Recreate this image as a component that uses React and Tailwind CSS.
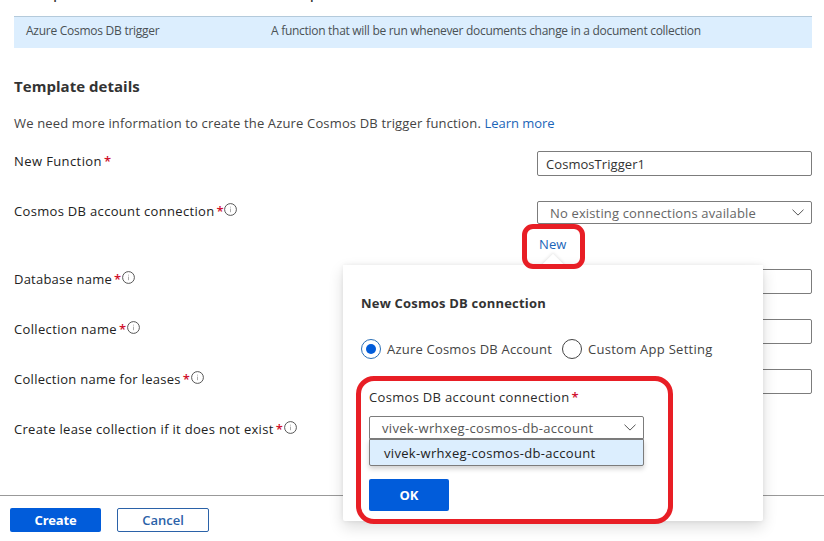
function InfoIcon() {
  return (
    <svg className="-mt-[5px] ml-[2px] h-[13px] w-[13px]" viewBox="0 0 13 13" fill="none">
      <circle cx="6.5" cy="6.5" r="5.9" stroke="#444" strokeWidth="0.9" />
      <path d="M6.5 5.6v3.6M6.5 3.7v0.9" stroke="#a3a3a3" strokeWidth="0.9" />
    </svg>
  );
}

function Chevron() {
  return (
    <svg className="h-[7px] w-3" viewBox="0 0 12 7" fill="none">
      <path d="M0.5 0.7L6 6.1L11.5 0.7" stroke="#555" strokeWidth="1" />
    </svg>
  );
}

function Required() {
  return (
    <span className="-mt-px ml-[2px] w-[6px] text-[13px] font-semibold tracking-normal text-[#d0102c]">*</span>
  );
}

function Field({ label, tracking, info = true, height = "h-[50px]", children }) {
  return (
    <div className={`flex items-start justify-between ${height}`}>
      <label className={`flex h-[22px] items-center whitespace-nowrap text-[13px] font-medium text-[#222] ${tracking}`}>
        {label}
        <Required />
        {info && <InfoIcon />}
      </label>
      <div className="flex w-[275px] flex-col">{children}</div>
    </div>
  );
}

function TextBox({ value = "" }) {
  return (
    <div className="flex h-[25px] items-center rounded-[2px] border border-[#7c7c7c] bg-white px-2 pt-[2px] text-[13px] tracking-[0.06px] text-[#333]">
      {value}
    </div>
  );
}

function Radio({ checked }) {
  return (
    <span className={`flex h-5 w-5 items-center justify-center rounded-full border ${checked ? "border-[#2b6fb5]" : "border-[#444]"}`}>
      {checked && <span className="h-[10px] w-[10px] rounded-full bg-[#015cda]" />}
    </span>
  );
}

function ConnectionPopover() {
  return (
    <div className="absolute left-[343px] top-[265px] h-[256px] w-[420px] rounded-[2px] bg-white pl-[18px] pt-[27px] shadow-[0_6px_15px_rgba(0,0,0,0.14),0_0_5px_rgba(0,0,0,0.07)]">
      <div className="absolute left-[202px] top-[-8px] h-4 w-4 rotate-45 bg-white shadow-[-1px_-1px_3px_rgba(0,0,0,0.09)]" />
      <div className="absolute left-0 top-0 h-5 w-full bg-white" />
      <h2 className="h-[22px] text-[13px] font-bold leading-[22px] tracking-[0.19px] text-[#333]">New Cosmos DB connection</h2>
      <div className="mt-[25px] flex h-5 items-center text-[13px] text-[#444]">
        <Radio checked />
        <span className="ml-[6px] w-[175px] pt-[2px] tracking-[0.21px]">Azure Cosmos DB Account</span>
        <Radio />
        <span className="ml-[6px] pt-[2px] tracking-[0.27px]">Custom App Setting</span>
      </div>
      <div className="ml-2 mt-7 w-[275px]">
        <div className="flex h-[22px] items-center text-[13px] font-medium tracking-[0.32px] text-[#2b2b2b]">
          Cosmos DB account connection
          <Required />
        </div>
        <div className="mt-[7px] flex h-[23px] items-center justify-between rounded-t-[2px] border border-[#7c7c7c] pl-3 pr-[7px] text-[13px] tracking-[0.32px] text-[#555]">
          <span className="pt-[2px]">vivek-wrhxeg-cosmos-db-account</span>
          <Chevron />
        </div>
        <div className="flex h-[27px] items-center rounded-b-[2px] border border-[#7c7c7c] bg-[#dceefe] pl-[14px] pt-[2px] text-[13px] tracking-[0.32px] text-[#222] shadow-[0_3px_5px_rgba(0,0,0,0.18)]">
          vivek-wrhxeg-cosmos-db-account
        </div>
        <button className="mt-[13px] block h-8 w-20 rounded-[2px] bg-[#015cda] pt-px text-[13px] font-bold text-white">OK</button>
      </div>
    </div>
  );
}

export default function App() {
  return (
    <div className="relative h-[541px] w-[824px] overflow-hidden bg-white font-['Open_Sans','Noto_Sans',sans-serif]">
      <div className="flex h-[495px] flex-col overflow-hidden pl-[14px] pr-3">
        <div className="flex h-4 shrink-0 pl-3 text-[13px] font-semibold leading-5 text-[#333]">
          <span className="-mt-4 w-[245px]">Template</span>
          <span className="-mt-4">Description</span>
        </div>
        <div className="flex h-8 shrink-0 items-center border-t border-[#b4cadb] bg-[#dceefe] pl-3 text-[12px] text-[#4a5155]">
          <span className="-mt-[3px] w-[245px] tracking-[-0.26px]">Azure Cosmos DB trigger</span>
          <span className="-mt-[3px] tracking-[-0.286px]">A function that will be run whenever documents change in a document collection</span>
        </div>
        <h1 className="mt-[27px] h-[22px] text-[15px] font-bold leading-[22px] tracking-[0.04px] text-[#333]">Template details</h1>
        <p className="mt-4 h-5 whitespace-nowrap text-[13px] leading-5 tracking-[0.15px] text-[#444]">
          We need more information to create the Azure Cosmos DB trigger function.{" "}
          <a className="tracking-[-0.04px] text-[#1b65b8]">Learn more</a>
        </p>
        <div className="mt-[18px]">
          <Field label="New Function" tracking="tracking-[0.4px]" info={false}>
            <TextBox value="CosmosTrigger1" />
          </Field>
          <Field label="Cosmos DB account connection" tracking="tracking-[0.32px]" height="h-[68px]">
            <div className="flex h-[23px] items-center justify-between rounded-[2px] border border-[#7c7c7c] pl-3 pr-[7px] text-[13px] tracking-[0.15px] text-[#666]">
              <span className="pt-[2px]">No existing connections available</span>
              <Chevron />
            </div>
            <a className="ml-[2px] mt-[10px] h-5 text-[13px] leading-5 tracking-[0.1px] text-[#1b65b8]">New</a>
          </Field>
          <Field label="Database name" tracking="tracking-[0.22px]">
            <TextBox />
          </Field>
          <Field label="Collection name" tracking="tracking-[0.35px]">
            <TextBox />
          </Field>
          <Field label="Collection name for leases" tracking="tracking-[0.28px]">
            <TextBox />
          </Field>
          <Field label="Create lease collection if it does not exist" tracking="tracking-[0.305px]" />
        </div>
      </div>
      <div className="flex h-[46px] gap-4 border-t border-[#999] pl-[10px] pt-3">
        <button className="h-6 w-[91px] rounded-[2px] bg-[#015cda] pt-px text-[13px] font-bold tracking-[-0.2px] text-white">Create</button>
        <button className="h-6 w-[92px] rounded-[2px] border border-[#2b62a8] bg-white pt-px text-[13px] font-semibold text-[#2b62a8]">Cancel</button>
      </div>
      <ConnectionPopover />
      <div className="absolute left-[522px] top-[224px] h-[45px] w-[63px] rounded-[11px] border-[5px] border-[#e81e25]" />
      <div className="absolute left-[356px] top-[376px] h-[148px] w-[317px] rounded-[18px] border-[5px] border-[#e81e25]" />
    </div>
  );
}
